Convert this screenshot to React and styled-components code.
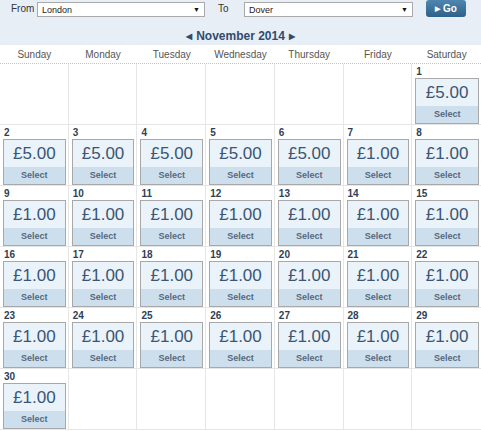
import styled, { createGlobalStyle } from 'styled-components';

const GlobalStyle = createGlobalStyle`
    body {
        margin: 0;
        background: #fff;
        font-family: "Liberation Sans", Arial, sans-serif;
    }
`

const dayNames = ['Sunday', 'Monday', 'Tuesday', 'Wednesday', 'Thursday', 'Friday', 'Saturday'];

// November 2014 starts on a Saturday
const buildCells = () => {
    const cells = [];
    for (let i = 0; i < 6; i++) cells.push(null);
    for (let d = 1; d <= 30; d++) {
        cells.push({ day: d, price: d <= 6 ? '£5.00' : '£1.00' });
    }
    while (cells.length < 42) cells.push(null);
    return cells;
}

const FakeSelect = ({ value, width }) => (
    <SelectBox $width={width}>
        <span>{value}</span>
        <Caret>▼</Caret>
    </SelectBox>
)

const App = () => {
    const cells = buildCells();
    return (
        <Page>
            <GlobalStyle />
            <Header>
                <SearchBar>
                    <Label>From</Label>
                    <FakeSelect value="London" width={168} />
                    <Label $left={13}>To</Label>
                    <FakeSelect value="Dover" width={169} />
                    <GoButton><span className="tri">▶</span> Go</GoButton>
                </SearchBar>
                <MonthNav>
                    <Arrow>◀</Arrow>
                    November 2014
                    <Arrow>▶</Arrow>
                </MonthNav>
            </Header>
            <DayNames>
                {dayNames.map((n) => <DayName key={n}>{n}</DayName>)}
            </DayNames>
            <Grid>
                {cells.map((c, i) => (
                    <Cell key={i}>
                        {c && (
                            <>
                                <DayNum>{c.day}</DayNum>
                                <PriceCard>
                                    <Price>{c.price}</Price>
                                    <SelectBand>Select</SelectBand>
                                </PriceCard>
                            </>
                        )}
                    </Cell>
                ))}
            </Grid>
        </Page>
    )
}

const Page = styled.div`
    width: 481px;
`

const Header = styled.div`
    background: #e8eef6;
    height: 45px;
    display: flex;
    flex-direction: column;
`

const SearchBar = styled.div`
    display: flex;
    align-items: flex-start;
    height: 20px;
    padding-left: 11px;
`

const Label = styled.div`
    font-size: 10px;
    color: #333;
    margin-top: 3px;
    margin-left: ${p => p.$left || 0}px;
    width: 26px;
`

const SelectBox = styled.div`
    box-sizing: border-box;
    width: ${p => p.$width}px;
    height: 15px;
    margin-top: 2px;
    background: #fff;
    border: 1px solid #a9a9a9;
    display: flex;
    align-items: center;
    justify-content: space-between;
    padding: 0 4px 0 4px;
    font-size: 9px;
    color: #222;
`

const Caret = styled.span`
    font-size: 7px;
    color: #111;
`

const GoButton = styled.div`
    box-sizing: border-box;
    margin-left: 13px;
    width: 40px;
    height: 17px;
    border-radius: 3px;
    background: linear-gradient(#4f86b0, #2e6089);
    color: #fff;
    font-size: 10px;
    font-weight: bold;
    display: flex;
    align-items: center;
    justify-content: center;
    gap: 3px;
    .tri {
        font-size: 7px;
    }
`

const MonthNav = styled.div`
    display: flex;
    align-items: center;
    justify-content: center;
    gap: 4px;
    margin-top: 9px;
    font-size: 12px;
    font-weight: bold;
    color: #2f4c6d;
`

const Arrow = styled.span`
    font-size: 8px;
    color: #2f4c6d;
`

const DayNames = styled.div`
    display: grid;
    grid-template-columns: repeat(7, 1fr);
    height: 18px;
    border-bottom: 1px dotted #c4c4c4;
`

const DayName = styled.div`
    font-size: 10px;
    color: #555;
    text-align: center;
    line-height: 19px;
`

const Grid = styled.div`
    display: grid;
    grid-template-columns: repeat(7, 1fr);
    grid-auto-rows: 61px;
`

const Cell = styled.div`
    border-right: 1px solid #e6e6e6;
    border-bottom: 1px solid #e6e6e6;
    padding: 2px 2px 0 3px;
    display: flex;
    flex-direction: column;
    &:nth-child(7n) {
        border-right: none;
    }
`

const DayNum = styled.div`
    font-size: 10px;
    font-weight: bold;
    color: #2f3f55;
    height: 13px;
    line-height: 12px;
    padding-left: 1px;
`

const PriceCard = styled.div`
    box-sizing: border-box;
    height: 46px;
    border: 1px solid #a8a8a8;
    background: #eaf2fa;
    display: flex;
    flex-direction: column;
`

const Price = styled.div`
    flex: 1;
    font-size: 17px;
    color: #3a5674;
    text-align: center;
    line-height: 27px;
`

const SelectBand = styled.div`
    height: 17px;
    background: #cddfec;
    font-size: 9px;
    font-weight: bold;
    color: #56697f;
    text-align: center;
    line-height: 17px;
`

export default App;
